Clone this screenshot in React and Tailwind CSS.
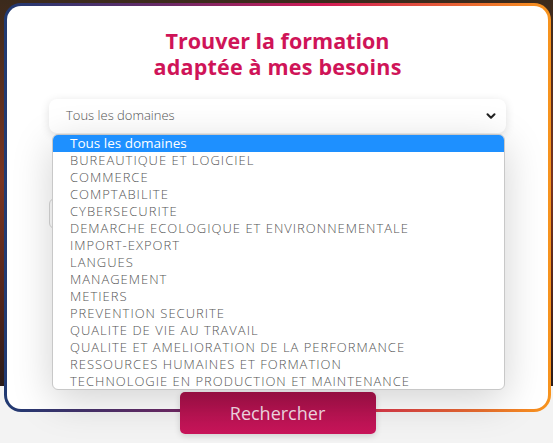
import { ChevronDown } from 'lucide-react';

const domaines = [
  'Tous les domaines',
  'BUREAUTIQUE ET LOGICIEL',
  'COMMERCE',
  'COMPTABILITE',
  'CYBERSECURITE',
  'DEMARCHE ECOLOGIQUE ET ENVIRONNEMENTALE',
  'IMPORT-EXPORT',
  'LANGUES',
  'MANAGEMENT',
  'METIERS',
  'PREVENTION SECURITE',
  'QUALITE DE VIE AU TRAVAIL',
  'QUALITE ET AMELIORATION DE LA PERFORMANCE',
  'RESSOURCES HUMAINES ET FORMATION',
  'TECHNOLOGIE EN PRODUCTION ET MAINTENANCE',
];

const App = () => {
  return (
    <div
      className="w-[553px] h-[443px] overflow-hidden pt-[3px] pl-[4px] pr-[2px] bg-[linear-gradient(to_bottom,#3b2a1c_0px,#7a3420_180px,#4a2219_320px,#2a1c1a_386px,#f3f3f3_386px)]"
      style={{ fontFamily: "'Open Sans', 'Liberation Sans', sans-serif" }}
    >
      <div className="rounded-[17px] p-[3px] bg-[linear-gradient(to_right,#203a72_0%,#6b2a66_30%,#d01b57_58%,#f7941d_100%)]">
        <div className="rounded-[14px] bg-white flex flex-col items-center pt-[22px]">
          <h2 className="flex flex-col items-center text-[#cf1458] text-[21.5px] font-bold text-center">
            <span className="block h-[26px] leading-[26px]">Trouver la formation</span>
            <span className="block h-[26px] leading-[26px] tracking-[0.2px]">adaptée à mes besoins</span>
          </h2>

          <div className="relative w-[457px] mt-[19px] z-10">
            <div className="h-[34px] bg-white rounded-[8px] shadow-[0_2px_10px_rgba(0,0,0,0.12)] flex items-center justify-between pl-[17px] pr-[8px]">
              <span className="text-[13px] font-light text-[#555]">Tous les domaines</span>
              <ChevronDown size={14} strokeWidth={3.5} className="text-[#222]" />
            </div>

            <ul className="absolute left-[3px] right-[1px] top-[35px] h-[256px] bg-white rounded-[6px] overflow-hidden border border-[#c8c8c8] shadow-[0_10px_40px_rgba(0,0,0,0.18)]">
              {domaines.map((d, i) => (
                <li
                  key={d}
                  className={
                    i === 0
                      ? 'h-[17px] leading-[17px] pl-[17px] text-[13.5px] text-white bg-[#1e90ff] whitespace-nowrap'
                      : 'h-[17px] leading-[17px] pl-[17px] text-[13px] tracking-[1px] font-light text-[#555] whitespace-nowrap'
                  }
                >
                  {d}
                </li>
              ))}
            </ul>
          </div>

          <div className="w-[457px] mt-[65px] flex">
            <div className="w-[450px] h-[31px] rounded-[6px] border border-[#d6d6d6] bg-white" />
          </div>

          <button className="mt-[163px] -mb-[25px] relative w-[196px] h-[42px] rounded-[5px] bg-[linear-gradient(to_bottom,#a8114a,#c9155a)] text-[#f5dbe5] text-[18px] shadow-[0_2px_6px_rgba(0,0,0,0.15)]">
            Rechercher
          </button>
        </div>
      </div>
    </div>
  );
};

export default App;
